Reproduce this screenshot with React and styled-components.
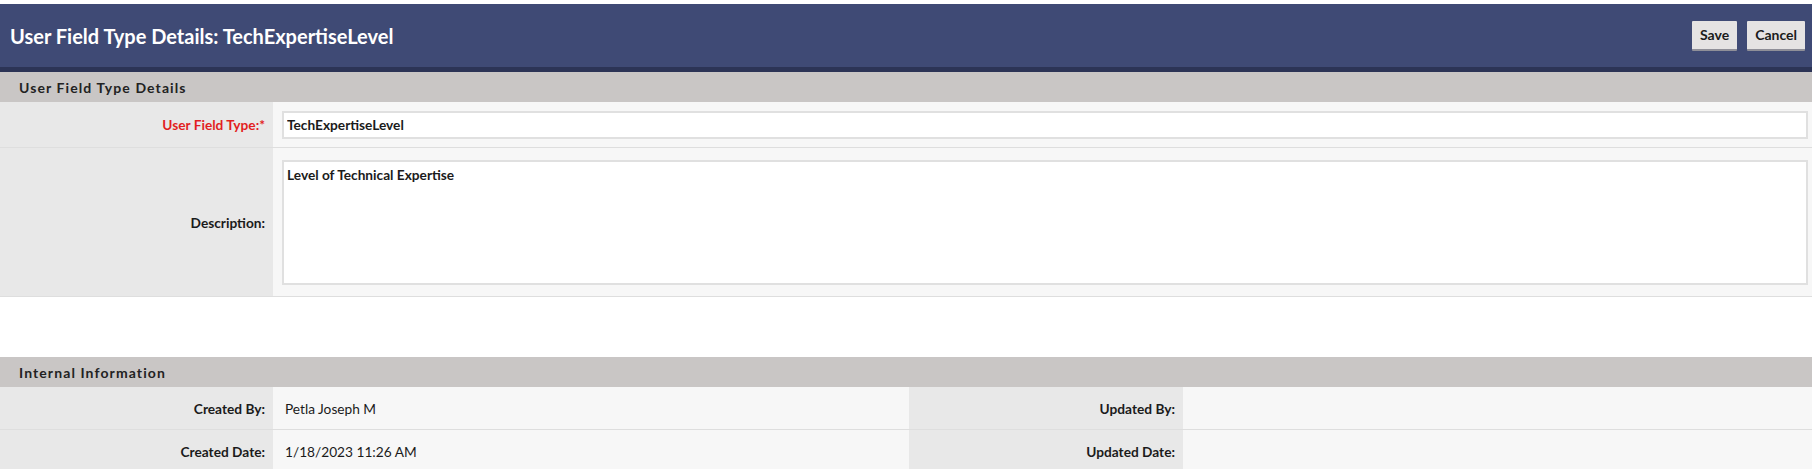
import React from "react"
import styled, { createGlobalStyle } from "styled-components"

const Global = createGlobalStyle`
body {
    margin: 0;
    font-family: Lato, "Liberation Sans", sans-serif;
    background: #ffffff;
    color: #1b1b1b;
}
`

export default function App () {
    const info = [
        ["Created By:", "Petla Joseph M", "Updated By:", ""],
        ["Created Date:", "1/18/2023 11:26 AM", "Updated Date:", ""],
    ]

    return (
    <>
        <Global />
        <Page>
            <Header>
                <h1>User Field Type Details: TechExpertiseLevel</h1>
                <Actions>
                    <Button type="button">Save</Button>
                    <Button type="button">Cancel</Button>
                </Actions>
            </Header>

            <SectionTitle>User Field Type Details</SectionTitle>
            <FormRow>
                <Label required>User Field Type:*</Label>
                <Value>
                    <Input type="text" defaultValue="TechExpertiseLevel" />
                </Value>
            </FormRow>
            <FormRow tall>
                <Label>Description:</Label>
                <Value>
                    <TextArea defaultValue="Level of Technical Expertise" />
                </Value>
            </FormRow>

            <Spacer />

            <SectionTitle>Internal Information</SectionTitle>
            {info.map((r, i) => (
                <InfoRow key={i}>
                    <Label>{r[0]}</Label>
                    <InfoValue>{r[1]}</InfoValue>
                    <Label>{r[2]}</Label>
                    <InfoValue>{r[3]}</InfoValue>
                </InfoRow>
            ))}
        </Page>
    </>
    )
}

const Page = styled.div`
padding-top: 4px;
`
const Header = styled.div`
display: flex;
justify-content: space-between;
align-items: center;
height: 63px;
background-color: #3f4a75;
border-bottom: 5px solid #2c3456;
padding: 0 7px 0 10px;
h1{
    margin: 0;
    color: white;
    font-size: 20px;
    font-weight: 700;
}
`
const Actions = styled.div`
display: flex;
gap: 10px;
`
const Button = styled.button`
font-family: Lato, "Liberation Sans", sans-serif;
font-size: 14px;
font-weight: 700;
color: #1b1b1b;
background-color: #e5e3e3;
border: none;
border-bottom: 2px solid #8f8f98;
border-radius: 1px;
height: 30px;
padding: 0 8px;
`
const SectionTitle = styled.div`
display: flex;
align-items: center;
height: 30px;
padding-left: 19px;
background-color: #c9c6c5;
font-size: 14px;
font-weight: 700;
letter-spacing: 1.1px;
color: #222;
`
const FormRow = styled.div`
display: grid;
grid-template-columns: 273px 1fr;
height: ${(props) => (props.tall ? "148px" : "45px")};
border-bottom: 1px solid #dedede;
`
const Label = styled.div`
display: flex;
align-items: center;
justify-content: flex-end;
padding-right: 8px;
background-color: #e8e8e8;
font-size: 13.7px;
font-weight: 700;
color: ${(props) => (props.required ? "#e21f1f" : "#1b1b1b")};
`
const Value = styled.div`
display: flex;
align-items: center;
padding: 0 4px 0 9px;
background-color: #f7f7f7;
`
const Input = styled.input`
box-sizing: border-box;
width: 100%;
height: 28px;
border: 2px solid #e0e0e0;
background: white;
padding: 0 3px;
font-family: Lato, "Liberation Sans", sans-serif;
font-size: 13.7px;
font-weight: 700;
color: #1b1b1b;
outline: none;
`
const TextArea = styled.textarea`
box-sizing: border-box;
width: 100%;
height: 125px;
border: 2px solid #e0e0e0;
background: white;
padding: 4px 3px;
font-family: Lato, "Liberation Sans", sans-serif;
font-size: 13.7px;
font-weight: 700;
color: #1b1b1b;
resize: none;
outline: none;
`
const Spacer = styled.div`
height: 60px;
`
const InfoRow = styled.div`
display: grid;
grid-template-columns: 273px 636px 274px 1fr;
height: 42px;
border-bottom: 1px solid #dedede;
`
const InfoValue = styled.div`
display: flex;
align-items: center;
padding-left: 12px;
background-color: #f7f7f7;
font-size: 13.7px;
color: #1b1b1b;
`
